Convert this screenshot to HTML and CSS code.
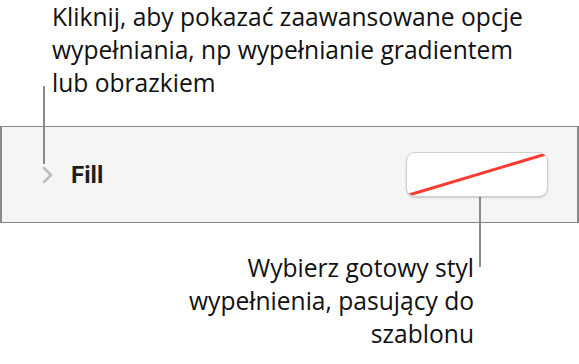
FILE: index.html
```html
<!DOCTYPE html>
<html lang="pl">
<head>
  <meta charset="UTF-8">
  <meta name="viewport" content="width=device-width, initial-scale=1.0">
  <title>Fill</title>
  <link rel="stylesheet" href="styles.css">
</head>
<body>
  <p class="note note-top">Kliknij, aby pokazać zaawansowane opcje<br>wypełniania, np wypełnianie gradientem<br>lub obrazkiem</p>

  <div class="panel">
    <span class="leader leader-chevron"></span>
    <svg class="chevron" width="12" height="18" viewBox="0 0 12 18">
      <polyline points="2,2 9,9 2,16" fill="none" stroke="#bdbdbd" stroke-width="2.6" stroke-linecap="round" stroke-linejoin="round"/>
    </svg>
    <span class="panel-title">Fill</span>
    <div class="swatch">
      <svg width="140" height="43" viewBox="0 0 140 43">
        <line x1="2" y1="42" x2="139" y2="1" stroke="#ff3b30" stroke-width="3"/>
      </svg>
      <span class="leader leader-swatch"></span>
    </div>
  </div>

  <p class="note note-bottom">Wybierz gotowy styl<br>wypełnienia, pasujący do<br>szablonu</p>
</body>
</html>
```

FILE: styles.css
```css
body {
  margin: 0;
  background: #fff;
  color: #111;
  font-family: "Open Sans", sans-serif;
}

.note {
  margin: 0;
  font-size: 24.6px;
  line-height: 33px;
}

.note-top {
  padding-left: 52px;
}

.note-bottom {
  margin-top: 28px;
  padding-right: 105px;
  text-align: right;
}

.panel {
  position: relative;
  display: flex;
  align-items: center;
  box-sizing: border-box;
  height: 97px;
  width: 579px;
  margin-top: 27px;
  padding-left: 40px;
  padding-right: 29px;
  background: #f5f5f5;
  border: solid #8a8a8a;
  border-width: 1px 2px;
}

.chevron {
  display: block;
}

.panel-title {
  margin-left: 17px;
  font-family: Roboto, sans-serif;
  font-weight: 700;
  font-size: 24px;
  color: #1e1e1e;
}

.swatch {
  position: relative;
  margin-left: auto;
  width: 140px;
  height: 43px;
  background: #fff;
  border: 1px solid #d0d0d0;
  border-radius: 9px;
  box-shadow: 0 1px 2px rgba(0, 0, 0, 0.18);
}

.swatch svg {
  display: block;
  border-radius: 8px;
}

.leader {
  position: absolute;
  width: 2px;
  background: #8a8a8a;
}

.leader-chevron {
  left: 41px;
  top: -41px;
  height: 78px;
}

.leader-swatch {
  left: 72px;
  top: 44px;
  height: 70px;
}
```
